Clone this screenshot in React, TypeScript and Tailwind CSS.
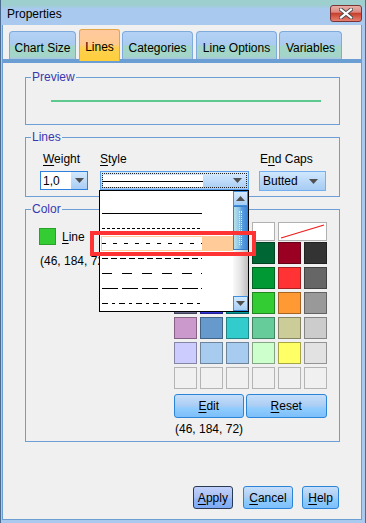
import React from "react"

const tabs = [
  { label: "Chart Size", cls: "ml-[6px] w-[67px]", active: false },
  { label: "Lines", cls: "ml-[3px] w-[41px]", active: true },
  { label: "Categories", cls: "ml-[2px] w-[71px]", active: false },
  { label: "Line Options", cls: "ml-[3px] w-[81px]", active: false },
  { label: "Variables", cls: "ml-[2px] w-[63px]", active: false },
]

// rows below the "no colour" row, 6 columns each; "" means empty cell
const palette = [
  ["#000066", "#330099", "#006666", "#006633", "#990022", "#333333"],
  ["#333399", "#0000cc", "#009999", "#009933", "#ff3333", "#666666"],
  ["#666688", "#3333dd", "#009999", "#33cc33", "#ff9933", "#999999"],
  ["#cc99cc", "#6699cc", "#33cccc", "#66cc99", "#cccc99", "#cccccc"],
  ["#ccccff", "#a8ccf0", "#a8ccf0", "#ccffcc", "#ffff66", "#e2e2e2"],
  ["", "", "", "", "", ""],
]

const styles = [
  { dash: "", dot: false, none: true },
  { dash: "", dot: false },
  { dash: "3 2", dot: false },
  { dash: "4 7", dot: false, selected: true },
  { dash: "6 3", dot: false },
  { dash: "10 10", dot: true },
  { dash: "16 4", dot: true },
  { dash: "6 4 3 4", dot: false },
]

function Arrow({ up = false }: { up?: boolean }) {
  return (
    <svg width="9" height="5" viewBox="0 0 9 5" className="block">
      <polygon points={up ? "0,5 9,5 4.5,0" : "0,0 9,0 4.5,5"} fill="#505050" />
    </svg>
  )
}

function DashLine({ dash, dot, h = 15 }: { dash: string; dot: boolean; h?: number }) {
  const y = Math.floor(h / 2) + 0.5
  return (
    <svg width="100" height={h} className="block">
      <line
        x1="0"
        y1={y}
        x2="100"
        y2={y}
        stroke="#000"
        strokeDasharray={dash || undefined}
        shapeRendering="crispEdges"
      />
      {dot && <rect x="99" y={y - 0.5} width="1" height="1" fill="#000" />}
    </svg>
  )
}

function Group({ title, className, children }: { title: string; className: string; children?: React.ReactNode }) {
  return (
    <div className={`relative w-[315px] border border-[#6d9fd6] ${className}`}>
      <span className="absolute -top-[8px] left-[5px] px-[1px] bg-[#f0f0f0] text-[#3838b0] leading-[14px]">
        {title}
      </span>
      {children}
    </div>
  )
}

function U({ children }: { children: React.ReactNode }) {
  return <span className="underline underline-offset-[2px]">{children}</span>
}

function Button({ children, className, dark = false }: { children: React.ReactNode; className: string; dark?: boolean }) {
  return (
    <div
      className={`flex items-center justify-center h-[23px] rounded-[3px] border ${
        dark
          ? "border-[#2a3a55] bg-[linear-gradient(to_bottom,#c0d0fa_0%,#a8bff4_50%,#8fb6f8_58%,#7eaaf4_100%)]"
          : "border-[#2b84d8] bg-[linear-gradient(to_bottom,#c6dffa_0%,#aaccf3_50%,#92cdfd_58%,#7cbffb_100%)]"
      } ${className}`}
    >
      {children}
    </div>
  )
}

export default function App() {
  return (
    <div className="relative w-[366px] h-[523px] flex flex-col overflow-hidden bg-[#a9c9ef] border-x border-[#4d6d90] font-['Liberation_Sans',Arial,sans-serif] text-[12px] leading-[14px] text-black">
      {/* title bar */}
      <div className="h-[25px] flex items-start bg-[linear-gradient(to_bottom,#9dcfcf_0px,#9dcfcf_5px,#a9c9ef_9px)]">
        <span className="ml-[6px] mt-[7px]">Properties</span>
        <div className="ml-auto mr-[3px] mt-[5px] w-[32px] h-[17px] rounded-[3px] border border-[#7a3434] bg-[linear-gradient(to_bottom,#e7b0a8_0%,#dc8a82_40%,#c8402e_50%,#d65a48_70%,#e88070_100%)] flex items-center justify-center">
          <svg width="14" height="11" viewBox="0 0 14 11">
            <path d="M2 1.5 L12 9.5 M12 1.5 L2 9.5" stroke="#4a4a4a" strokeWidth="4" strokeLinecap="square" />
            <path d="M2 1.5 L12 9.5 M12 1.5 L2 9.5" stroke="#ffffff" strokeWidth="2.2" strokeLinecap="square" />
          </svg>
        </div>
      </div>

      {/* body */}
      <div className="flex-1 ml-[1px] mr-[3px] mb-[3px] flex flex-col bg-[#f0f0f0] border-x border-b border-[#6b9ed3]">
        {/* tabs */}
        <div className="h-[34px] flex items-end">
          {tabs.map((t) =>
            t.active ? (
              <div
                key={t.label}
                className={`relative z-10 -mb-[2px] h-[32px] pt-[2px] flex items-center justify-center rounded-t-[3px] border border-b-0 border-[#e3a647] bg-[linear-gradient(to_bottom,#ffc99e_0%,#ffca90_45%,#ffd04e_58%,#ffcf3c_100%)] ${t.cls}`}
              >
                {t.label}
              </div>
            ) : (
              <div
                key={t.label}
                className={`h-[28px] pt-[4px] flex items-center justify-center rounded-t-[4px] border border-b-0 border-[#7eaadc] bg-[linear-gradient(to_bottom,#b4d2f4_0%,#a9cbf0_48%,#a3d6c8_52%,#a3d6c8_90%,#a9c4e4_100%)] ${t.cls}`}
              >
                {t.label}
              </div>
            )
          )}
        </div>
        <div className="h-[4px] bg-[#6b9ed3]" />

        {/* page */}
        <div className="flex-1 flex flex-col px-[22px] pt-[14px]">
          <Group title="Preview" className="h-[48px]">
            <div className="mt-[22px] ml-[25px] w-[270px] h-[2px] bg-[#5ec98e]" />
          </Group>

          <Group title="Lines" className="mt-[12px] h-[60px]">
            <div className="flex pt-[14px]">
              <div className="ml-[14px] w-[48px]">
                <div className="pl-[3px]">
                  <U>W</U>eight
                </div>
                <div className="mt-[5px] h-[19px] flex border border-[#2f7fdc] bg-[linear-gradient(to_bottom,#d3e8fc_0%,#a9cdf5_100%)]">
                  <div className="w-[30px] bg-white flex items-center pl-[2px]">1,0</div>
                  <div className="flex-1 flex items-center justify-center">
                    <Arrow />
                  </div>
                </div>
              </div>
              <div className="ml-[12px] w-[149px]">
                <div>
                  <U>S</U>tyle
                </div>
                <div className="mt-[5px] h-[19px] p-[1px] border border-[#5aa0ec] bg-[linear-gradient(to_bottom,#d8ecfd_0%,#c4dffa_40%,#a8ccf4_100%)]">
                  <div className="h-full flex border border-dotted border-[#222]">
                    <div className="self-end mb-[0px] w-[100px] h-[12px] bg-white">
                      <DashLine dash="" dot={false} h={12} />
                    </div>
                    <div className="flex-1 flex items-center justify-end pr-[4px]">
                      <Arrow />
                    </div>
                  </div>
                </div>
              </div>
              <div className="ml-[10px] w-[67px]">
                <div className="pl-[1px]">
                  E<U>n</U>d Caps
                </div>
                <div className="mt-[5px] h-[20px] flex items-center border border-[#74b0ee] bg-[linear-gradient(to_bottom,#d0e8fd_0%,#bcdaf9_45%,#a6ccf4_100%)]">
                  <span className="ml-[3px]">Butted</span>
                  <span className="ml-auto mr-[7px]">
                    <Arrow />
                  </span>
                </div>
              </div>
            </div>
          </Group>

          <Group title="Color" className="mt-[12px] h-[233px]">
            <div className="flex pt-[12px]">
              <div className="ml-[13px] w-[135px] pt-[6px]">
                <div className="flex items-center">
                  <div className="w-[17px] h-[17px] bg-[#33cc33] border border-[#2aa02a]" />
                  <span className="ml-[6px]">
                    <U>L</U>ine
                  </span>
                </div>
                <div className="mt-[9px] pl-[1px]">(46, 184, 72)</div>
              </div>
              <div className="w-[153px]">
                <div className="flex gap-[3px] h-[19px] mb-[1px]">
                  {[0, 1, 2, 3].map((i) => (
                    <div key={i} className="w-[23px] h-full bg-white border border-[#b0b0b0]" />
                  ))}
                  <div className="w-[49px] h-full bg-white border border-[#b0b0b0]">
                    <svg width="47" height="17" className="block">
                      <line x1="2" y1="15" x2="45" y2="2" stroke="#ee1c1c" strokeWidth="1.3" />
                    </svg>
                  </div>
                </div>
                <div className="flex flex-col gap-[3px]">
                  {palette.map((row, r) => (
                    <div key={r} className="flex gap-[3px]">
                      {row.map((c, i) =>
                        c ? (
                          <div key={i} className="w-[23px] h-[22px] border border-black/35" style={{ backgroundColor: c }} />
                        ) : (
                          <div key={i} className="w-[23px] h-[22px] border border-[#b4b4b4] bg-[#f0f0f0]" />
                        )
                      )}
                    </div>
                  ))}
                </div>
                <div className="mt-[5px] flex gap-[2px]">
                  <Button className="w-[70px] h-[24px]">
                    <U>E</U>dit
                  </Button>
                  <Button className="w-[82px] h-[24px]">
                    <U>R</U>eset
                  </Button>
                </div>
                <div className="mt-[4px] pl-[1px]">(46, 184, 72)</div>
              </div>
            </div>
          </Group>

          <div className="mt-[44px] flex">
            <Button dark className="ml-[168px] w-[41px]">
              <U>A</U>pply
            </Button>
            <Button className="ml-[10px] w-[52px]">
              <U>C</U>ancel
            </Button>
            <Button className="ml-[9px] w-[38px]">
              <U>H</U>elp
            </Button>
          </div>
        </div>
      </div>

      {/* open style list */}
      <div className="absolute left-[98px] top-[190px] w-[150px] h-[122px] flex border border-black bg-white z-20">
        <div className="flex-1 flex flex-col">
          {styles.map((s, i) =>
            s.selected ? (
              <div key={i} className="ml-[1px] h-[15px] flex items-center bg-[#ffcc99]">
                <div className="ml-[1px] w-[100px] h-[13px] bg-white">
                  <DashLine dash={s.dash} dot={s.dot} h={13} />
                </div>
              </div>
            ) : (
              <div key={i} className="h-[15px] pl-[2px]">
                {!s.none && <DashLine dash={s.dash} dot={s.dot} />}
              </div>
            )
          )}
        </div>
        <div className="w-[15px] flex flex-col">
          <div className="h-[15px] flex items-center justify-center border border-[#3b8ee0] bg-[linear-gradient(to_bottom,#d4eafd_0%,#a6cdf5_100%)]">
            <Arrow up />
          </div>
          <div className="h-[44px] border border-[#3a7fc8] bg-[linear-gradient(to_right,#b8e2ec_0%,#8cc4e4_40%,#5a9ee0_60%,#3e88d8_100%)] flex justify-center">
            <div className="mt-[4px] mb-[4px] w-[3px] border-x border-dotted border-[#d8f0f0]" />
          </div>
          <div className="flex-1 bg-[linear-gradient(to_right,#fafafa_0%,#e4e4e4_50%,#bebebe_100%)]" />
          <div className="h-[15px] flex items-center justify-center border border-[#3b8ee0] bg-[linear-gradient(to_bottom,#d4eafd_0%,#a6cdf5_100%)]">
            <Arrow />
          </div>
        </div>
      </div>

      {/* red highlight */}
      <div className="absolute left-[89px] top-[231px] w-[166px] h-[25px] border-[4px] border-[#ff3333] z-30" />
    </div>
  )
}
